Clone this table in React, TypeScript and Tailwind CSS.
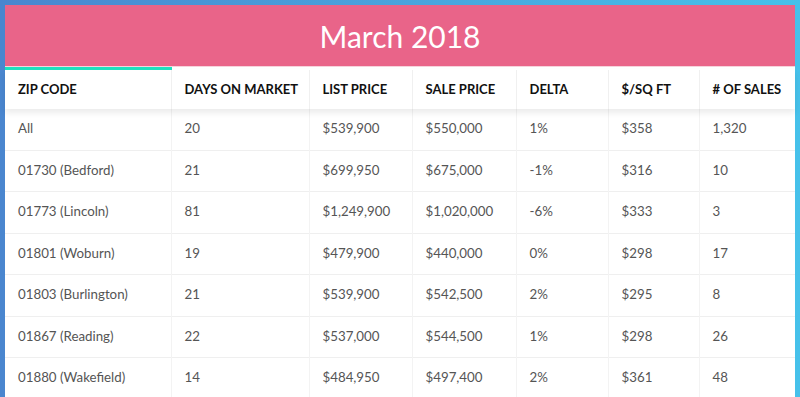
import React from "react";

const cols = [166, 138, 103, 104, 92, 91, 96];
const headers = ["ZIP CODE", "DAYS ON MARKET", "LIST PRICE", "SALE PRICE", "DELTA", "$/SQ FT", "# OF SALES"];
const rows = [
  ["All", "20", "$539,900", "$550,000", "1%", "$358", "1,320"],
  ["01730 (Bedford)", "21", "$699,950", "$675,000", "-1%", "$316", "10"],
  ["01773 (Lincoln)", "81", "$1,249,900", "$1,020,000", "-6%", "$333", "3"],
  ["01801 (Woburn)", "19", "$479,900", "$440,000", "0%", "$298", "17"],
  ["01803 (Burlington)", "21", "$539,900", "$542,500", "2%", "$295", "8"],
  ["01867 (Reading)", "22", "$537,000", "$544,500", "1%", "$298", "26"],
  ["01880 (Wakefield)", "14", "$484,950", "$497,400", "2%", "$361", "48"],
];

export default function App() {
  return (
    <div
      className="w-[800px] h-[397px] overflow-hidden bg-gradient-to-r from-[#4a86cf] to-[#46c1ea] pl-[5px] pt-[5px]"
      style={{ fontFamily: "Lato, 'Open Sans', sans-serif" }}
    >
      <div className="w-[790px] bg-white">
        <div className="h-[62px] bg-[#e96489] flex items-center justify-center border-b border-[#f6d3dc]">
          <span className="text-white text-[30px] leading-none pt-[1px]">March 2018</span>
        </div>
        <table className="table-fixed border-collapse w-[790px]">
          <colgroup>
            {cols.map((w, i) => (
              <col key={i} style={{ width: w }} />
            ))}
          </colgroup>
          <thead>
            <tr className="h-[40px] relative shadow-[0_4px_6px_rgba(0,0,0,0.08)]">
              {headers.map((h, i) => (
                <th
                  key={i}
                  className={`text-left font-bold text-[13px] text-[#111] pl-[13px] pt-[1px] border-l border-[#f0f0f0] first:border-l-0 ${
                    i === 0 ? "border-t-[3px] border-t-[#1de2c0]" : "border-t-[3px] border-t-white"
                  }`}
                >
                  {h}
                </th>
              ))}
            </tr>
          </thead>
          <tbody>
            {rows.map((r, ri) => (
              <tr key={ri} className="h-[41.5px] border-b border-[#efefef]">
                {r.map((c, ci) => (
                  <td
                    key={ci}
                    className="text-[13.3px] text-[#555] pl-[13px] border-l border-[#f3f3f3] first:border-l-0"
                  >
                    {c}
                  </td>
                ))}
              </tr>
            ))}
          </tbody>
        </table>
      </div>
    </div>
  );
}
